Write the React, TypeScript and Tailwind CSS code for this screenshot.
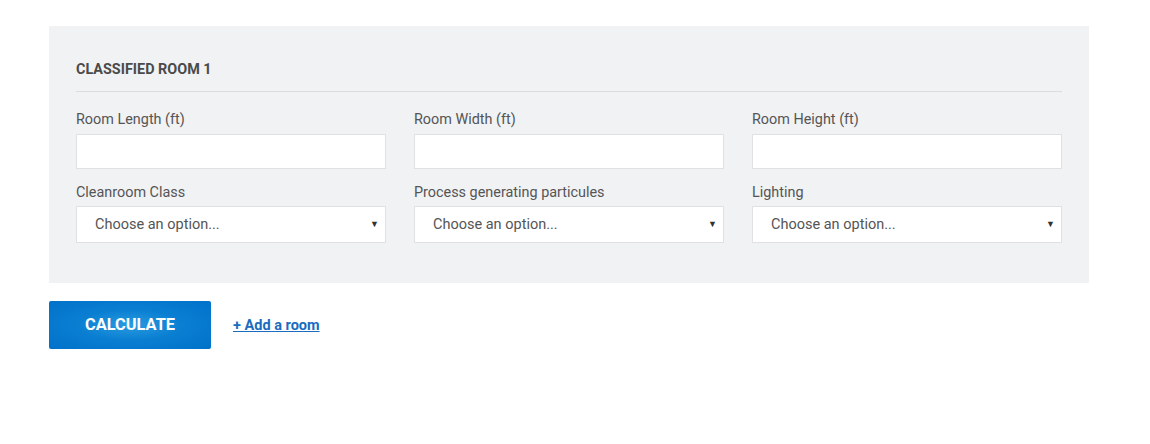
import React from "react";

const font = { fontFamily: "Roboto, 'Noto Sans', Arial, sans-serif" };

function Field({ label }: { label: string }) {
  return (
    <div className="flex flex-col">
      <label className="text-[14.4px] leading-[20px] text-[#555555] pt-[1px] mb-[4px]">{label}</label>
      <input className="h-[35px] w-full bg-white border border-[#dfe1e4] outline-none" />
    </div>
  );
}

function SelectField({ label }: { label: string }) {
  return (
    <div className="flex flex-col">
      <label className="text-[14.4px] leading-[20px] text-[#555555] pt-[1px] mb-[3px]">{label}</label>
      <div className="h-[37px] w-full bg-white border border-[#dfe1e4] flex items-center justify-between pl-[18px] pr-[6px]">
        <span className="text-[14.5px] text-[#555555] pt-[1px]">Choose an option...</span>
        <span className="text-[9px] text-[#333333]">▼</span>
      </div>
    </div>
  );
}

export default function App() {
  return (
    <div className="bg-white w-[1150px] h-[444px] pl-[49px] pt-[26px]" style={font}>
      <div className="w-[1040px] bg-[#f1f2f4] px-[27px] pt-[34px] pb-[40px]">
        <h2 className="text-[14.4px] leading-[20px] font-bold text-[#4a4a4a] uppercase pb-[11px] border-b border-[#dadcdf]">
          Classified Room 1
        </h2>
        <div className="grid grid-cols-3 gap-x-[28px] pt-[17px]">
          <Field label="Room Length (ft)" />
          <Field label="Room Width (ft)" />
          <Field label="Room Height (ft)" />
        </div>
        <div className="grid grid-cols-3 gap-x-[28px] pt-[13px]">
          <SelectField label="Cleanroom Class" />
          <SelectField label="Process generating particules" />
          <SelectField label="Lighting" />
        </div>
      </div>
      <div className="flex items-center mt-[18px]">
        <button
          className="w-[162px] h-[48px] rounded-[2px] text-white font-bold text-[16.4px] uppercase"
          style={{ background: "radial-gradient(ellipse at center, #2a9be0 0%, #0a7fd2 45%, #0071c9 100%)" }}
        >
          Calculate
        </button>
        <a href="#" className="ml-[22px] pt-[2px] text-[14.5px] font-bold text-[#1a6cc0] underline">
          + Add a room
        </a>
      </div>
    </div>
  );
}
